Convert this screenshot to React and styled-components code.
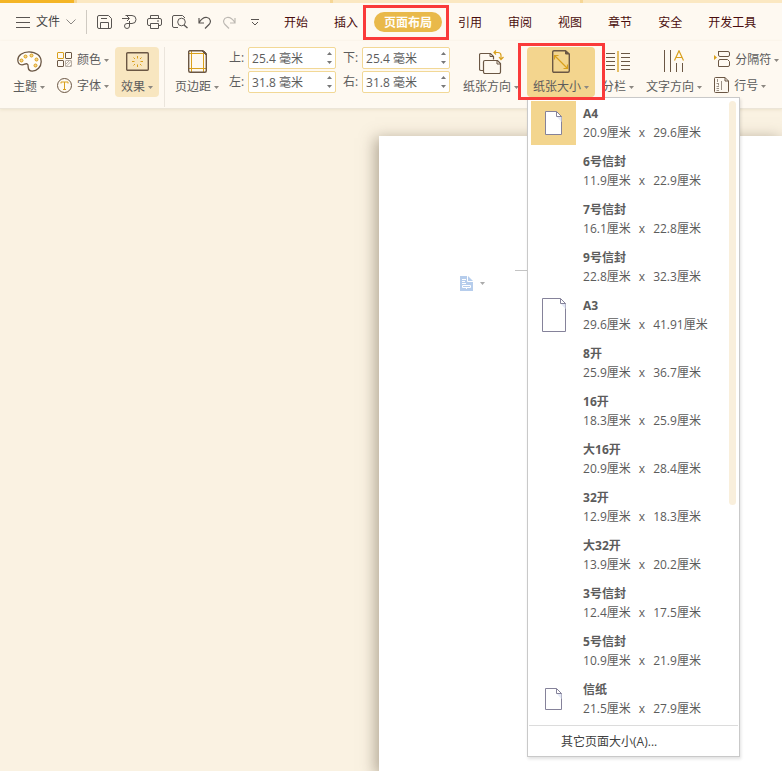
import React from "react";
import styled, { createGlobalStyle } from "styled-components";

const color = {
  bar: "#fef9f1",
  desk: "#faf2e2",
  gold: "#d9a01c",
  brown: "#6b5744",
  ink: "#595552",
  text: "#5c5c5c",
  tab: "#4a0d0d",
  field: "#f2d896",
  active: "#f3d58e",
  mark: "#fa3a3a",
  edge: "#c9c9c9",
};

const GlobalStyle = createGlobalStyle`
  * { box-sizing: border-box; }
  body {
    margin: 0;
    overflow: hidden;
    font-family: "Open Sans", "Noto Sans CJK SC", sans-serif;
    font-size: 12px;
    line-height: 18px;
    color: ${color.text};
    background: ${color.desk};
  }
  button, input { font: inherit; color: inherit; }
  button { padding: 0; border: 0; background: none; white-space: nowrap; cursor: pointer; }
  svg { display: block; flex: none; }
`;

const Window = styled.div`
  display: flex;
  flex-direction: column;
  min-height: 100vh;
`;

const TitleStrip = styled.div`
  display: grid;
  grid-template-columns: 74px 3px 253px 3px 247px 3px 1fr;
  height: 3px;
  background: #fbe8c2;
`;

const StripPart = styled.span`
  background: ${(p) => (p.$main ? "#f4b526" : "#f6d696")};
  grid-column: ${(p) => p.$col};
`;

const MenuBar = styled.header`
  display: flex;
  align-items: center;
  height: 38px;
  padding-left: 15px;
  background: ${color.bar};
`;

const FileButton = styled.button`
  display: flex;
  align-items: center;
  gap: 6px;
  padding-right: 8px;
  color: #444;
`;

const Separator = styled.span`
  flex: none;
  width: 1px;
  height: ${(p) => p.$height}px;
  background: ${(p) => p.$tone};
`;

const MenuSeparator = styled(Separator)`
  margin-left: 2px;
`;

const QuickTools = styled.div`
  display: flex;
  padding: 0 7px 0 5px;
`;

const QuickButton = styled.button`
  display: grid;
  place-items: center;
  width: 25px;
  height: 24px;
`;

const Tabs = styled.nav`
  display: flex;
  gap: 6px;
`;

const Tab = styled.button`
  position: relative;
  height: 20px;
  padding: 2px 10px 0;
  border-radius: 10px;
  font-weight: ${(p) => (p.$current ? 700 : 400)};
  color: ${(p) => (p.$current ? "#fffdf8" : color.tab)};
  background: ${(p) => (p.$current ? "#e9b94a" : "transparent")};
`;

const Highlight = styled.span`
  position: absolute;
  inset: ${(p) => p.$inset};
  z-index: 5;
  border: 3px solid ${color.mark};
  pointer-events: none;
`;

const Ribbon = styled.section`
  display: flex;
  align-items: flex-start;
  position: relative;
  z-index: 2;
  height: 68px;
  padding: 6px 0 0 7px;
  background: ${color.bar};
  border-bottom: 1px solid #ece5d8;
  box-shadow: 0 1px 3px #ece2cc;
`;

const ToolButton = styled.button`
  display: flex;
  flex: none;
  flex-direction: column;
  align-items: center;
  height: 50px;
  padding: 0 6px 1px;
  border-radius: 4px;
  background: ${(p) => p.$fill || "transparent"};
`;

const IconSlot = styled.span`
  display: grid;
  place-items: center;
  height: 29px;
`;

const Label = styled.span`
  display: flex;
  align-items: center;
  gap: 3px;
  padding-top: 2px;
`;

const SmallColumn = styled.div`
  display: flex;
  flex: none;
  flex-direction: column;
  gap: 6px;
  padding: 2px 6px 0;
`;

const SmallButton = styled.button`
  display: flex;
  align-items: center;
  gap: 5px;
`;

const Divider = styled(Separator)`
  margin: 0 4px 0 5px;
`;

const Margins = styled.div`
  display: grid;
  flex: none;
  grid-template-columns: auto auto;
  gap: 2px 7px;
  padding: 0 7px 0 4px;
`;

const Field = styled.label`
  display: flex;
  align-items: center;
  gap: 4px;
`;

const FieldName = styled.span`
  width: 15px;
`;

const FieldBox = styled.span`
  display: flex;
  width: 88px;
  height: 22px;
  padding: 0 3px;
  background: #fff;
  border: 1px solid ${color.field};
  border-radius: 2px;
`;

const FieldInput = styled.input`
  flex: 1;
  min-width: 0;
  padding: 2px 0 0;
  border: 0;
  outline: 0;
  background: none;
`;

const Stepper = styled.span`
  display: flex;
  flex-direction: column;
  justify-content: space-evenly;
`;

const StepButton = styled.button`
  height: 8px;
`;

const MenuAnchor = styled.div`
  position: relative;
  flex: none;
  margin: 0 1px 0 2px;
`;

const Menu = styled.div`
  position: absolute;
  top: 100%;
  left: 0;
  width: 213px;
  background: #fff;
  border: 1px solid ${color.edge};
  box-shadow: 1px 2px 3px #0000001f;
`;

const MenuBody = styled.div`
  display: flex;
  padding: 3px 3px 0;
`;

const SizeList = styled.ul`
  flex: 1;
  margin: 0;
  padding: 0;
  list-style: none;
`;

const SizeOption = styled.button`
  display: flex;
  gap: 7px;
  width: 100%;
  height: 48px;
  text-align: left;
`;

const Preview = styled.span`
  display: grid;
  place-items: center;
  width: 45px;
  height: 44px;
  background: ${(p) => (p.$selected ? color.active : "transparent")};
`;

const SizeText = styled.span`
  display: flex;
  flex-direction: column;
  padding-top: 3px;
  line-height: 19px;
`;

const SizeName = styled.strong`
  font-weight: 700;
`;

const Dimensions = styled.span`
  display: flex;
  gap: 8px;
`;

const ScrollThumb = styled.span`
  width: 7px;
  height: 404px;
  border-radius: 4px;
  background: #f9efdc;
`;

const MoreSizes = styled.button`
  display: block;
  width: calc(100% - 2px);
  height: 31px;
  margin: 0 1px;
  padding: 2px 0 0 32px;
  text-align: left;
  color: #404040;
  border-top: 1px solid #dcdcdc;
`;

const Workspace = styled.main`
  display: grid;
  flex: 1;
  grid-template-columns: 379px 1fr;
  padding-top: 27px;
`;

const Page = styled.article`
  display: flex;
  grid-column: 2;
  align-items: flex-start;
  padding: 134px 0 0 81px;
  background: #fff;
  box-shadow: -3px 3px 14px 1px #6f624d80;
`;

const PasteOptions = styled.button`
  display: flex;
  align-items: center;
  gap: 7px;
  margin-top: 6px;
`;

const CornerMark = styled.span`
  width: 24px;
  height: 1px;
  margin-left: 30px;
  background: #c4c4c4;
`;

const Svg = ({ w, h, children, stroke = color.ink }) => (
  <svg width={w} height={h} viewBox={`0 0 ${w} ${h}`} fill="none" stroke={stroke} aria-hidden="true">
    {children}
  </svg>
);

const Caret = ({ up, tone = "#8b8781" }) => (
  <svg width="5" height="3" viewBox="0 0 5 3" fill={tone} aria-hidden="true">
    <path d={up ? "M0 3h5L2.5 0z" : "M0 0h5L2.5 3z"} />
  </svg>
);

const HamburgerIcon = () => (
  <Svg w={15} h={11}><path d="M1 .5h14M1 5.500h14M1 10.500h14" /></Svg>
);
const ChevronIcon = () => (
  <Svg w={10} h={6} stroke="#8a8783"><path d="M.5.5 5 5 9.500.5" /></Svg>
);
const SaveIcon = () => (
  <Svg w={15} h={14}>
    <path d="M2 .5h9.500l3 3v8.500a1.500 1.500 0 0 1-1.500 1.500H2A1.500 1.500 0 0 1 .5 12V2A1.500 1.500 0 0 1 2 .5z" />
    <path d="M4 3.500h6M3.500 13.500V7.500h8v6" />
  </Svg>
);
const ExportIcon = () => (
  <Svg w={15} h={14}>
    <path d="M3.500.5H10a4 4 0 0 1 0 8H5a2.500 2.500 0 1 0 2.500 2.500V6M0 3.500h7M5 1l2.500 2.500L5 6" />
  </Svg>
);
const PrintIcon = () => (
  <Svg w={15} h={14}>
    <path d="M3.500 3.500v-3h8v3M3.500 10.500H2A1.500 1.500 0 0 1 .5 9V5A1.500 1.500 0 0 1 2 3.500h11A1.500 1.500 0 0 1 14.500 5v4a1.500 1.500 0 0 1-1.500 1.500h-1.500" />
    <path d="M3.500 8.500h8v5h-8zM10 6h2" />
  </Svg>
);
const SearchPageIcon = () => (
  <Svg w={16} h={14}>
    <path d="M6 12.500H2A1.500 1.500 0 0 1 .5 11V2A1.500 1.500 0 0 1 2 .5h8.500L13 3" />
    <circle cx="9.500" cy="7" r="3.800" />
    <path d="m12 10 3.500 3" strokeWidth="1.400" />
  </Svg>
);
const UndoIcon = ({ flip }) => (
  <Svg w={13} h={13} stroke={flip ? "#bdb9b3" : color.ink}>
    <path
      transform={flip ? "matrix(-1 0 0 1 13 0)" : undefined}
      d="M1 2v5h5M1 6.800C3 3.500 6 1 9 1.500c3.500.6 4.500 4.500 2 7L7 12.500"
      strokeWidth="1.200"
    />
  </Svg>
);
const MoreIcon = () => (
  <Svg w={8} h={7}><path d="M0 .5h8M1 3l3 3 3-3" /></Svg>
);

const PaletteIcon = () => (
  <Svg w={25} h={21} stroke={color.brown}>
    <path
      fill="#fffdf8"
      strokeWidth="1.300"
      d="M12 .8C5.500.8.8 4.500.8 9c0 3 1.700 4.800 4.200 4.800 2.400 0 3.300-1.400 5-1 1.600.5 1 2 1.200 3.600.2 2.300 1.500 3.700 4 3.700 5 0 9-4.400 9-9.400C24.200 4.900 19 .8 12 .8z"
    />
    <g fill="#f7d58a" stroke={color.gold}>
      <circle cx="4.500" cy="9.500" r="1.500" />
      <circle cx="8.500" cy="5.500" r="1.500" />
      <circle cx="14.500" cy="4.500" r="1.500" />
      <circle cx="19.500" cy="8.500" r="1.500" />
      <circle cx="18.500" cy="14.500" r="1.500" />
    </g>
  </Svg>
);
const ColorsIcon = () => (
  <Svg w={15} h={15} stroke={color.brown}>
    <rect x=".5" y=".5" width="6" height="6" rx=".5" stroke={color.gold} />
    <rect x="8.500" y=".5" width="6" height="6" rx=".5" />
    <rect x=".5" y="8.500" width="6" height="6" rx=".5" />
    <g stroke="#b7aea4">
      <rect x="8.500" y="8.500" width="6" height="6" rx=".5" />
      <path d="m8.500 12.500 4-4M9 14.500l5.500-5.500M12.500 14.500l2-2" />
    </g>
  </Svg>
);
const FontIcon = () => (
  <Svg w={15} h={15} stroke={color.brown}>
    <circle cx="7.500" cy="7.500" r="7" />
    <path stroke={color.gold} d="M4 5.500v-1.500h7v1.500M7.500 4v7.500M6 11.500h3" />
  </Svg>
);
const EffectsIcon = () => (
  <Svg w={23} h={19} stroke={color.brown}>
    <rect x=".7" y=".7" width="21.600" height="17.600" rx="1" strokeWidth="1.400" />
    <path stroke={color.gold} d="M11.500 4v2.500M11.500 12.500V15M6 9.500h2.500M14.500 9.500H17M7.500 5.500l1.500 1.500M14 12l1.500 1.500M7.500 13.500 9 12M14 7l1.500-1.500" />
  </Svg>
);
const MarginsIcon = () => (
  <Svg w={19} h={23} stroke={color.brown}>
    <path stroke={color.gold} d="M3.500 1v21M15.500 1v21M1 3.500h17M1 18.500h17" />
    <path d="M1.500.7h13L18.300 4v16.800a1.500 1.500 0 0 1-1.500 1.500H2.200A1.500 1.500 0 0 1 .7 20.800V1.500z" strokeWidth="1.400" />
    <path d="M14 1l4 4V3l-2-2z" fill={color.brown} />
  </Svg>
);
const OrientationIcon = () => (
  <Svg w={25} h={24} stroke={color.brown}>
    <path d="M4 20.500H2A1.500 1.500 0 0 1 .5 19V5A1.500 1.500 0 0 1 2 3.500h9.500l3 3v3" strokeWidth="1.200" />
    <path d="M6 10.500h12.500l3 3V22a1.500 1.500 0 0 1-1.500 1.500H6A1.500 1.500 0 0 1 4.500 22V12A1.500 1.500 0 0 1 6 10.500z" fill={color.bar} strokeWidth="1.200" />
    <path d="M11 4v2.500h3M18 11v3h3" />
    <path stroke={color.gold} d="M15 2.500h4c2 0 3 1 3 3V9M17 .5l-2 2 2 2M20 7l2 2.500L24.500 7" strokeWidth="1.200" />
  </Svg>
);
const PaperSizeIcon = () => (
  <Svg w={18} h={23} stroke={color.brown}>
    <path d="M2 .7h11.500L17.300 4v16.800a1.500 1.500 0 0 1-1.500 1.500H2A1.300 1.300 0 0 1 .7 21V2A1.300 1.300 0 0 1 2 .7z" strokeWidth="1.400" />
    <path d="M13.500 1v3h3.500z" fill={color.brown} />
    <path stroke={color.gold} d="m3 6 12 12M2.500 9.500v-4h4M15.500 14.500v4h-4" strokeWidth="1.200" />
  </Svg>
);
const ColumnsIcon = () => (
  <Svg w={24} h={21} stroke={color.brown}>
    <path d="M0 2.500h9M0 6.500h9M0 10.500h9M0 14.500h9M0 18.500h9M15 2.500h9M15 6.500h9M15 10.500h9M15 14.500h9M15 18.500h9" />
    <path stroke={color.gold} d="M12 0v21" strokeWidth="1.300" />
  </Svg>
);
const TextDirectionIcon = () => (
  <Svg w={20} h={23} stroke={color.brown}>
    <path d="M.5 0v22M6.500 0v22M12.500 13v9M18.500 13v9" />
    <path stroke={color.gold} d="M10.500 10.500 15 .8l4.500 9.700M12 7.500h6" strokeWidth="1.200" />
  </Svg>
);
const BreakIcon = () => (
  <Svg w={16} h={16} stroke={color.brown}>
    <path d="M4.500 0v4A1.500 1.500 0 0 0 6 5.500h8A1.500 1.500 0 0 0 15.500 4V2A1.500 1.500 0 0 0 14 .5H4.500M4.500 15.500H14a1.500 1.500 0 0 0 1.500-1.500v-3.500l-2-2H6A1.500 1.500 0 0 0 4.500 10v5.500" />
    <path d="M0 4v5l3-2.500z" fill={color.gold} stroke="none" />
  </Svg>
);
const LineNumberIcon = () => (
  <Svg w={15} h={16} stroke={color.brown}>
    <path d="M1.500.5H11L14.500 4v10.500a1 1 0 0 1-1 1h-12a1 1 0 0 1-1-1v-13a1 1 0 0 1 1-1z" />
    <path d="M11 .5V4h3.500" />
    <path stroke="#9b9186" d="M3.500 2v3M2.500 6.500h2.500M4.500 7v1.500M2.500 9.500h2.500M2.500 11.500h2.500M2.500 13.500h2.500M7.500 4v9" />
  </Svg>
);
const SheetIcon = ({ w, h }) => (
  <Svg w={w} h={h} stroke="#85829a">
    <path d={`M.5.5h${w - 6}l5 5v${h - 6}h-${w - 1}z`} fill="#fff" />
    <path d={`M${w - 5} 6h4.500v5z`} fill="#e3e8f6" stroke="none" />
    <path d={`M${w - 5.5} .5v5h5`} />
  </Svg>
);
const PasteIcon = () => (
  <svg width="13" height="15" viewBox="0 0 13 15" aria-hidden="true">
    <path d="M0 0h8l5 5v10H0z" fill="#b6cdec" />
    <path d="M7.500 0v5.500H13M2 3.500h4M2 5.500h3M2 7.500h4M2.500 9.500h8v2h-8zM6.500 11.500V13" fill="none" stroke="#fff" />
  </svg>
);

const quickTools = [
  ["保存", <SaveIcon />],
  ["输出", <ExportIcon />],
  ["打印", <PrintIcon />],
  ["打印预览", <SearchPageIcon />],
  ["撤销", <UndoIcon />],
  ["恢复", <UndoIcon flip />],
  ["更多", <MoreIcon />],
];

const tabs = ["开始", "插入", "页面布局", "引用", "审阅", "视图", "章节", "安全", "开发工具"];

const margins = [
  ["上:", "25.4 毫米"],
  ["下:", "25.4 毫米"],
  ["左:", "31.8 毫米"],
  ["右:", "31.8 毫米"],
];

const sizes = [
  { name: "A4", width: "20.9", height: "29.6", sheet: [17, 24] },
  { name: "6号信封", width: "11.9", height: "22.9" },
  { name: "7号信封", width: "16.1", height: "22.8" },
  { name: "9号信封", width: "22.8", height: "32.3" },
  { name: "A3", width: "29.6", height: "41.91", sheet: [24, 34] },
  { name: "8开", width: "25.9", height: "36.7" },
  { name: "16开", width: "18.3", height: "25.9" },
  { name: "大16开", width: "20.9", height: "28.4" },
  { name: "32开", width: "12.9", height: "18.3" },
  { name: "大32开", width: "13.9", height: "20.2" },
  { name: "3号信封", width: "12.4", height: "17.5" },
  { name: "5号信封", width: "10.9", height: "21.9" },
  { name: "信纸", width: "21.5", height: "27.9", sheet: [17, 22] },
];

const Tool = ({ icon, label, fill }) => (
  <ToolButton $fill={fill}>
    <IconSlot>{icon}</IconSlot>
    <Label>{label}<Caret /></Label>
  </ToolButton>
);

const SmallTool = ({ icon, label }) => (
  <SmallButton>
    {icon}
    <Label>{label}<Caret /></Label>
  </SmallButton>
);

const MarginField = ({ name, value }) => (
  <Field>
    <FieldName>{name}</FieldName>
    <FieldBox>
      <FieldInput type="text" defaultValue={value} />
      <Stepper>
        <StepButton type="button" tabIndex={-1} aria-label="增加"><Caret up tone="#777" /></StepButton>
        <StepButton type="button" tabIndex={-1} aria-label="减少"><Caret tone="#777" /></StepButton>
      </Stepper>
    </FieldBox>
  </Field>
);

const PaperSizeMenu = () => (
  <Menu>
    <MenuBody>
      <SizeList>
        {sizes.map((s, i) => (
          <li key={s.name}>
            <SizeOption>
              <Preview $selected={i === 0}>
                {s.sheet && <SheetIcon w={s.sheet[0]} h={s.sheet[1]} />}
              </Preview>
              <SizeText>
                <SizeName>{s.name}</SizeName>
                <Dimensions>
                  <span>{s.width}厘米</span>
                  <span>x</span>
                  <span>{s.height}厘米</span>
                </Dimensions>
              </SizeText>
            </SizeOption>
          </li>
        ))}
      </SizeList>
      <ScrollThumb />
    </MenuBody>
    <MoreSizes>其它页面大小(A)...</MoreSizes>
  </Menu>
);

export default function App() {
  return (
    <Window>
      <GlobalStyle />
      <TitleStrip>
        <StripPart $main $col={1} />
        <StripPart $col={2} />
        <StripPart $col={4} />
        <StripPart $col={6} />
      </TitleStrip>
      <MenuBar>
        <FileButton><HamburgerIcon />文件<ChevronIcon /></FileButton>
        <MenuSeparator $height={24} $tone="#cfcac2" />
        <QuickTools>
          {quickTools.map(([name, icon]) => (
            <QuickButton key={name} aria-label={name}>{icon}</QuickButton>
          ))}
        </QuickTools>
        <Tabs>
          {tabs.map((name) => {
            const current = name === "页面布局";
            return (
              <Tab key={name} $current={current}>
                {name}
                {current && <Highlight $inset="-7px -7px -8px -11px" />}
              </Tab>
            );
          })}
        </Tabs>
      </MenuBar>
      <Ribbon>
        <Tool icon={<PaletteIcon />} label="主题" />
        <SmallColumn>
          <SmallTool icon={<ColorsIcon />} label="颜色" />
          <SmallTool icon={<FontIcon />} label="字体" />
        </SmallColumn>
        <Tool icon={<EffectsIcon />} label="效果" fill="#f8e6c0" />
        <Divider $height={60} $tone="#ebe5dc" />
        <Tool icon={<MarginsIcon />} label="页边距" />
        <Margins>
          {margins.map(([name, value]) => (
            <MarginField key={name} name={name} value={value} />
          ))}
        </Margins>
        <Tool icon={<OrientationIcon />} label="纸张方向" />
        <MenuAnchor>
          <Tool icon={<PaperSizeIcon />} label="纸张大小" fill={color.active} />
          <PaperSizeMenu />
          <Highlight $inset="-4px -10px -3px -9px" />
        </MenuAnchor>
        <Tool icon={<ColumnsIcon />} label="分栏" />
        <Tool icon={<TextDirectionIcon />} label="文字方向" />
        <SmallColumn>
          <SmallTool icon={<BreakIcon />} label="分隔符" />
          <SmallTool icon={<LineNumberIcon />} label="行号" />
        </SmallColumn>
      </Ribbon>
      <Workspace>
        <Page>
          <PasteOptions aria-label="粘贴选项"><PasteIcon /><Caret tone="#aaa" /></PasteOptions>
          <CornerMark />
        </Page>
      </Workspace>
    </Window>
  );
}
